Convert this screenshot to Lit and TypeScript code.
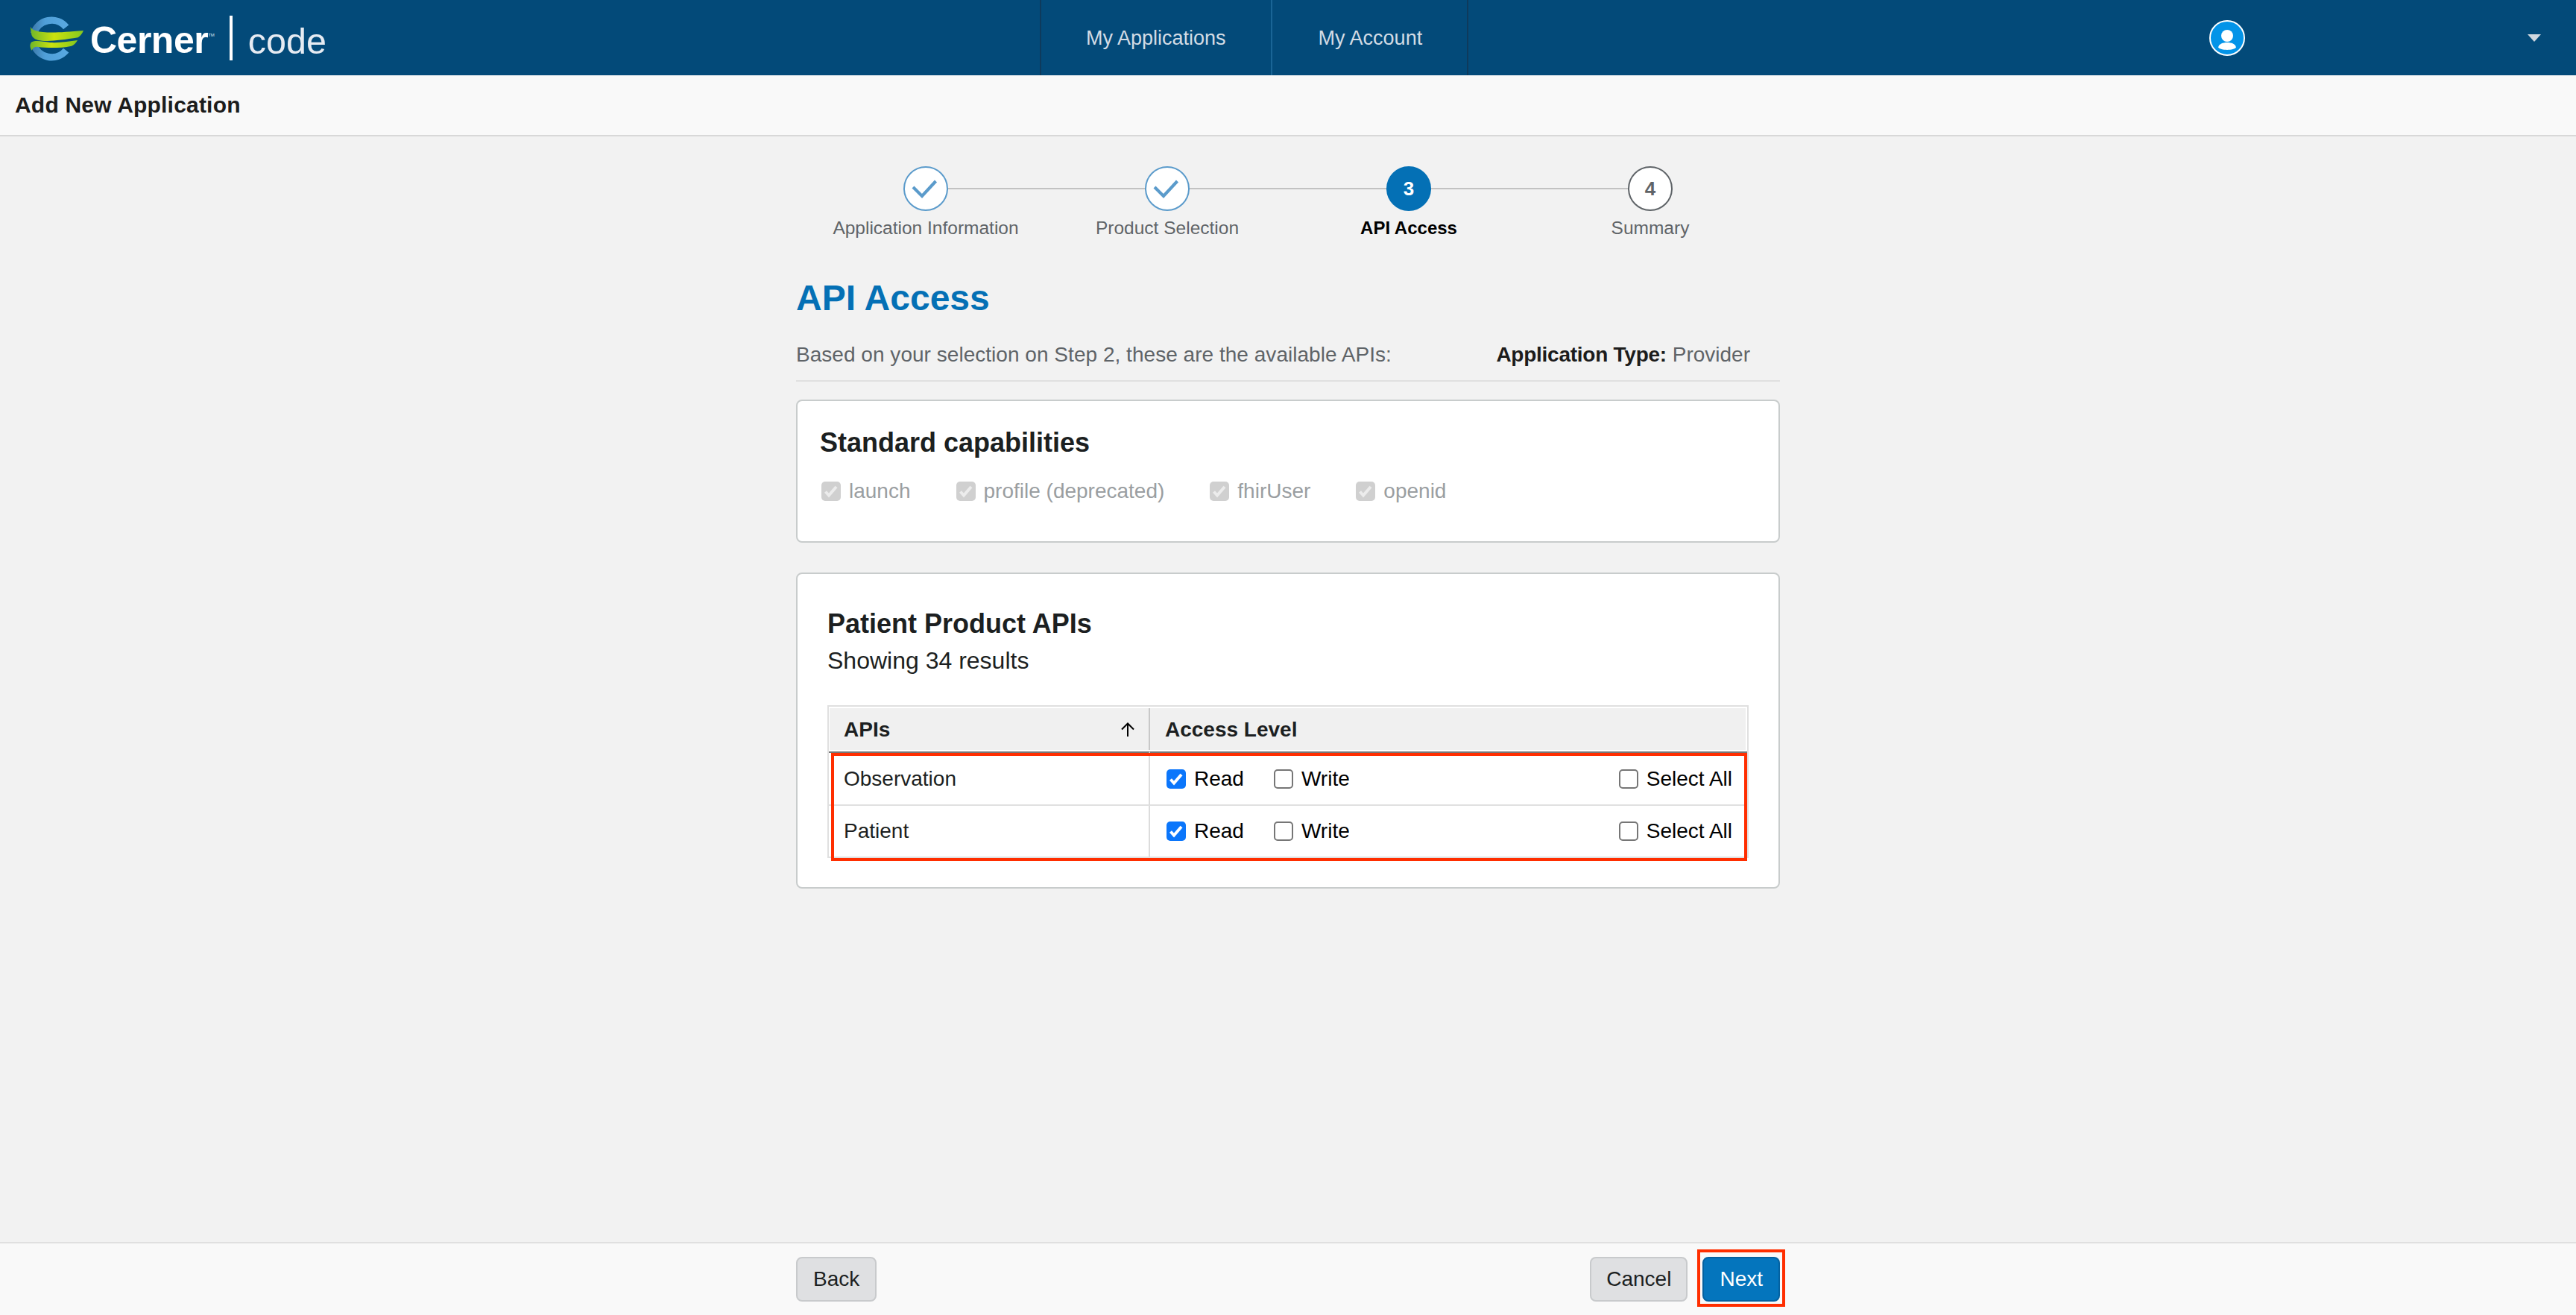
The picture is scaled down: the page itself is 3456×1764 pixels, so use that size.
import { LitElement, css, html, nothing } from 'lit';
import { customElement } from 'lit/decorators.js';

type Step = { label: string; state: 'done' | 'active' | 'todo' };

const STEPS: Step[] = [
  { label: 'Application Information', state: 'done' },
  { label: 'Product Selection', state: 'done' },
  { label: 'API Access', state: 'active' },
  { label: 'Summary', state: 'todo' },
];

const CAPABILITIES = ['launch', 'profile (deprecated)', 'fhirUser', 'openid'];
const APIS = ['Observation', 'Patient'];

@customElement('app-root')
export class AppRoot extends LitElement {
  static override styles = css`
    :host {
      display: flex;
      flex-direction: column;
      height: 1764px;
      overflow: hidden;
      background: #f2f2f2;
      font-family: 'Liberation Sans', Arial, sans-serif;
      font-size: 28px;
      color: #1c1f21;
    }

    /* top bar */
    .topbar {
      display: flex;
      align-items: center;
      height: 101px;
      flex: none;
      background: #034a79;
    }
    .brand {
      display: flex;
      align-items: center;
      width: 1395px;
      flex: none;
      padding-left: 30px;
      box-sizing: border-box;
    }
    .brand-mark {
      width: 100px;
      height: 72px;
      flex: none;
    }
    .brand-name {
      margin: 6px 0 0 -9px;
      font-size: 50px;
      font-weight: 700;
      letter-spacing: -0.5px;
      color: #fff;
      line-height: 60px;
    }
    .brand-tm {
      align-self: flex-start;
      margin-top: 28px;
      font-size: 6px;
      color: #dfe6ee;
      line-height: 8px;
    }
    .brand-rule {
      width: 4px;
      height: 60px;
      margin: 0 21px 0 20px;
      background: #fff;
    }
    .brand-product {
      margin-top: 8px;
      font-size: 48.500px;
      color: #e6ebf2;
      line-height: 60px;
    }
    .nav {
      display: flex;
      height: 100%;
      flex: none;
      border-right: 2px solid #0e3a5c;
    }
    .nav a {
      display: flex;
      align-items: center;
      padding: 2px 60px 0;
      border-left: 2px solid #1a6596;
      font-size: 27px;
      color: #d3dce5;
    }
    .nav a:first-child {
      border-left-color: #0e3a5c;
    }
    .nav a:last-child {
      padding-left: 62px;
    }
    .avatar {
      width: 48px;
      height: 48px;
      margin-left: 994px;
      flex: none;
    }
    .caret {
      width: 0;
      height: 0;
      margin-left: 379px;
      border-left: 9px solid transparent;
      border-right: 9px solid transparent;
      border-top: 10px solid #d0d8e0;
    }

    /* page title bar */
    .titlebar {
      display: flex;
      align-items: center;
      height: 82px;
      flex: none;
      box-sizing: border-box;
      padding-left: 20px;
      background: #f9f9f9;
      border-bottom: 2px solid #d8d8d8;
      font-size: 30px;
      font-weight: 700;
      letter-spacing: 0.2px;
      color: #1c1c1c;
    }

    main {
      flex: 1;
      width: 1320px;
      margin: 0 auto;
      padding-top: 40px;
    }

    /* stepper */
    .steps {
      display: flex;
      justify-content: center;
    }
    .step {
      position: relative;
      display: flex;
      flex-direction: column;
      align-items: center;
      width: 324px;
      color: #5f6468;
      font-size: 24.500px;
      line-height: 34px;
    }
    .step:not(:last-child)::before {
      content: '';
      position: absolute;
      top: 29px;
      left: 50%;
      width: 100%;
      height: 2px;
      background: #c2c2c2;
    }
    .step.active {
      color: #000;
      font-weight: 700;
      font-size: 24px;
    }
    .circle {
      position: relative;
      display: flex;
      align-items: center;
      justify-content: center;
      width: 60px;
      height: 60px;
      margin-bottom: 6px;
      box-sizing: border-box;
      border: 2px solid #5f6468;
      border-radius: 50%;
      background: #fff;
      font-size: 26px;
      font-weight: 700;
    }
    .step.done .circle {
      border-color: #5b9bcb;
    }
    .step.active .circle {
      border-color: #0470b5;
      background: #0470b5;
      color: #fff;
    }
    .circle svg {
      width: 36px;
      height: 28px;
      margin: 0 0 0 -4px;
    }

    h1 {
      margin: 52px 0 0;
      font-size: 48px;
      line-height: 50px;
      font-weight: 700;
      color: #0470b5;
    }
    .intro {
      display: flex;
      justify-content: space-between;
      margin-top: 32px;
      padding: 0 40px 15px 0;
      border-bottom: 2px solid #e0e0e0;
      line-height: 38px;
      color: #5f6468;
    }
    .intro-text {
      letter-spacing: 0.03px;
    }
    .intro b {
      letter-spacing: -0.25px;
      color: #1c1c1c;
    }

    .card {
      box-sizing: border-box;
      background: #fff;
      border: 2px solid #c8cccc;
      border-radius: 8px;
    }
    .card h2 {
      margin: 0;
      font-size: 36px;
      line-height: 44px;
      font-weight: 700;
    }

    .standard {
      height: 192px;
      margin-top: 24px;
      padding: 34px 30px 0;
    }
    .capabilities {
      display: flex;
      gap: 61px;
      margin: 24px 0 0 2px;
      color: #9a9ea1;
    }

    .check {
      display: inline-flex;
      align-items: center;
      gap: 11px;
      line-height: 38px;
    }
    .box {
      display: flex;
      align-items: center;
      justify-content: center;
      width: 26px;
      height: 26px;
      box-sizing: border-box;
      flex: none;
      border: 2px solid #767676;
      border-radius: 5px;
      background: #fff;
    }
    .box svg {
      width: 26px;
      height: 26px;
    }
    .box.on {
      border: none;
      background: #0b76fb;
      color: #fff;
    }
    .box.off {
      border: none;
      background: #d0d0d0;
      color: #ececec;
    }

    .products {
      height: 424px;
      margin-top: 40px;
      padding: 45px 40px 0;
    }
    .count {
      margin-top: 7px;
      font-size: 32px;
      line-height: 40px;
    }
    .table-wrap {
      position: relative;
      margin-top: 40px;
    }
    table {
      width: 100%;
      table-layout: fixed;
      border-collapse: separate;
      border-spacing: 0;
      border: 2px solid #e0e0e0;
      border-bottom: none;
      box-sizing: border-box;
    }
    col.api-col {
      width: 431px;
    }
    th {
      height: 60px;
      padding: 2px 20px 0;
      box-sizing: border-box;
      background: #f0f0f0;
      background-clip: padding-box;
      border-top: 2px solid #fff;
      border-bottom: 2px solid #fff;
      text-align: left;
      font-weight: 700;
    }
    th:first-child {
      border-left: 1px solid #fff;
      padding-left: 19px;
      box-shadow: inset -2px 0 0 #c8c8c8;
    }
    th:last-child {
      border-right: 2px solid #fff;
    }
    .th-inner {
      display: flex;
      align-items: center;
      justify-content: space-between;
    }
    .th-inner svg {
      width: 20px;
      height: 20px;
    }
    td {
      padding: 0 20px;
      box-sizing: border-box;
      border-bottom: 2px solid #e0e0e0;
    }
    td:first-child {
      border-right: 2px solid #dcdcdc;
    }
    td:last-child {
      padding-left: 22px;
    }
    tbody tr:first-child td {
      height: 73px;
      border-top: 2px solid #777;
    }
    tbody tr:last-child td {
      height: 70px;
    }
    .access {
      display: flex;
      align-items: center;
      gap: 40px;
      color: #000;
    }
    .access .push {
      margin-left: auto;
    }

    /* review annotations */
    .mark {
      position: absolute;
      box-sizing: border-box;
      border: 4px solid #ff2e00;
      pointer-events: none;
    }
    .mark-rows {
      top: 64px;
      left: 5px;
      right: 2px;
      height: 145px;
    }
    .mark-next {
      top: -10px;
      bottom: -7px;
      left: -7px;
      right: -7px;
    }

    /* footer */
    footer {
      flex: none;
      height: 98px;
      box-sizing: border-box;
      padding-top: 18px;
      background: #f9f9f9;
      border-top: 2px solid #e0e0e0;
    }
    .actions {
      display: flex;
      gap: 20px;
      width: 1320px;
      margin: 0 auto;
    }
    .next-wrap {
      position: relative;
      display: flex;
    }
    button {
      height: 60px;
      padding: 0 21px;
      box-sizing: border-box;
      border: 2px solid #c8cacc;
      border-radius: 8px;
      background: #dfe0e2;
      font: inherit;
      color: #1c1f21;
    }
    .back {
      margin-right: auto;
    }
    .cancel {
      padding: 0 20px;
    }
    .primary {
      border-color: #0461a0;
      background: #0475bd;
      color: #fff;
    }
  `;

  private tick() {
    return html`<svg viewBox="0 0 26 26" fill="none" stroke="currentColor" stroke-width="4">
      <path d="M5.500 13.500l4.500 5L20 7" />
    </svg>`;
  }

  private checkbox(label: string, state: 'on' | 'off' | 'empty', cls = '') {
    return html`<label class="check ${cls}">
      <span class="box ${state}">${state === 'empty' ? nothing : this.tick()}</span>${label}
    </label>`;
  }

  private logo() {
    return html`<svg class="brand-mark" viewBox="0 0 300 216">
      <defs>
        <linearGradient id="ring" x1="0" x2="1" y1="0" y2="0">
          <stop offset="0" stop-color="#3f7fb2" />
          <stop offset="0.35" stop-color="#4f9fd8" />
          <stop offset="1" stop-color="#58a8e0" />
        </linearGradient>
        <linearGradient id="leaf" x1="0" x2="1" y1="0" y2="0">
          <stop offset="0" stop-color="#6fb62a" />
          <stop offset="0.45" stop-color="#cbe20e" />
          <stop offset="1" stop-color="#84c81e" />
        </linearGradient>
      </defs>
      <g fill="none" stroke="url(#ring)" stroke-width="28">
        <path d="M46 90A75 75 0 0 1 176 64" />
        <path d="M46 132A75 75 0 0 0 176 158" />
      </g>
      <path
        fill="url(#leaf)"
        d="M32 62C42 86 96 92 246 78C240 92 232 100 224 106C150 118 96 124 62 116C48 112 38 104 36 90Z"
      />
      <path
        fill="url(#leaf)"
        d="M38 124C54 116 80 122 112 126C150 128 190 122 222 117C216 128 208 136 198 140C150 150 96 148 64 144C50 142 42 148 38 158C30 148 28 132 38 124Z"
      />
    </svg>`;
  }

  private avatar() {
    return html`<svg class="avatar" viewBox="0 0 48 48">
      <circle cx="24" cy="24" r="23" fill="#0394e8" stroke="#fff" stroke-width="2" />
      <circle cx="24" cy="21" r="8" fill="#fff" />
      <path d="M12 36.500C13 32 18 30 24 30C30 30 35 32 36 36.500C33 41 15 41 12 36.500Z" fill="#fff" />
    </svg>`;
  }

  private step(step: Step, index: number) {
    return html`<div class="step ${step.state}">
      <div class="circle">
        ${step.state === 'done'
          ? html`<svg viewBox="0 0 36 28" fill="none" stroke="#5b9bcb" stroke-width="4.200">
              <path d="M3 12l12 12L33.500 4" />
            </svg>`
          : index + 1}
      </div>
      ${step.label}
    </div>`;
  }

  override render() {
    return html`
      <header class="topbar">
        <div class="brand">
          ${this.logo()}
          <span class="brand-name">Cerner</span><span class="brand-tm">TM</span>
          <span class="brand-rule"></span>
          <span class="brand-product">code</span>
        </div>
        <nav class="nav">
          <a>My Applications</a>
          <a>My Account</a>
        </nav>
        ${this.avatar()}
        <span class="caret"></span>
      </header>
      <div class="titlebar">Add New Application</div>
      <main>
        <div class="steps">${STEPS.map((s, i) => this.step(s, i))}</div>
        <h1>API Access</h1>
        <div class="intro">
          <span class="intro-text">Based on your selection on Step 2, these are the available APIs:</span>
          <span><b>Application Type:</b> Provider</span>
        </div>
        <section class="card standard">
          <h2>Standard capabilities</h2>
          <div class="capabilities">${CAPABILITIES.map((c) => this.checkbox(c, 'off'))}</div>
        </section>
        <section class="card products">
          <h2>Patient Product APIs</h2>
          <div class="count">Showing 34 results</div>
          <div class="table-wrap">
            <table>
              <colgroup><col class="api-col" /><col /></colgroup>
              <thead>
                <tr>
                  <th>
                    <div class="th-inner">
                      APIs
                      <svg viewBox="0 0 20 20" fill="none" stroke="#000" stroke-width="2">
                        <path d="M10 19V1.500M2 9.500L10 1.500L18 9.500" />
                      </svg>
                    </div>
                  </th>
                  <th>Access Level</th>
                </tr>
              </thead>
              <tbody>
                ${APIS.map(
                  (api) => html`<tr>
                    <td>${api}</td>
                    <td>
                      <div class="access">
                        ${this.checkbox('Read', 'on')} ${this.checkbox('Write', 'empty')}
                        ${this.checkbox('Select All', 'empty', 'push')}
                      </div>
                    </td>
                  </tr>`,
                )}
              </tbody>
            </table>
            <div class="mark mark-rows"></div>
          </div>
        </section>
      </main>
      <footer>
        <div class="actions">
          <button class="back">Back</button>
          <button class="cancel">Cancel</button>
          <div class="next-wrap">
            <button class="primary">Next</button>
            <span class="mark mark-next"></span>
          </div>
        </div>
      </footer>
    `;
  }
}
